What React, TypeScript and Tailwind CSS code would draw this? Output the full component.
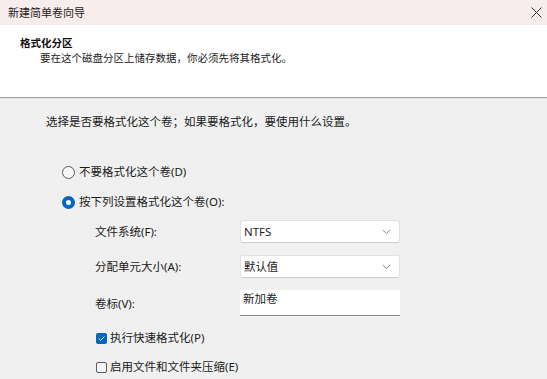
import React from "react";

const font = { fontFamily: '"Noto Sans", "Noto Sans CJK SC", sans-serif' };

function Chevron() {
  return (
    <svg width="9" height="6" viewBox="0 0 9 6" className="shrink-0">
      <path d="M0.8 1 L4.5 4.6 L8.2 1" fill="none" stroke="#7a7a7a" strokeWidth="0.9" />
    </svg>
  );
}

function Select({ value }: { value: string }) {
  return (
    <div className="flex h-[23px] w-[160px] items-center justify-between rounded-[3px] border border-[#e2e2e2] border-b-[#cdcdcd] bg-white pl-[3px] pr-[8px] text-[11.4px] text-[#1a1a1a]">
      <span>{value}</span>
      <Chevron />
    </div>
  );
}

export default function App() {
  return (
    <div className="flex h-[379px] w-[547px] flex-col overflow-hidden bg-[#f0f0f0] text-[#1a1a1a]" style={font}>
      {/* title bar */}
      <div className="flex h-[25px] shrink-0 items-center justify-between bg-[#f8ecec] pl-[8px] pr-[5px]">
        <span className="text-[11px] leading-none text-[#222]">新建简单卷向导</span>
        <svg width="11" height="11" viewBox="0 0 11 11">
          <path d="M0.5 0.5 L10.5 10.5 M10.5 0.5 L0.5 10.5" stroke="#333" strokeWidth="1" />
        </svg>
      </div>
      {/* header */}
      <div className="h-[72px] shrink-0 bg-white pl-[20px] pt-[11px]">
        <div className="text-[10.5px] font-bold leading-[14px] text-[#111]">格式化分区</div>
        <div className="mt-[1px] pl-[20px] text-[10.5px] leading-[14px] text-[#222]">要在这个磁盘分区上储存数据，你必须先将其格式化。</div>
      </div>
      <div className="h-[1px] shrink-0 bg-[#a0a0a0]" />
      <div className="h-[1px] shrink-0 bg-[#e3e3e3]" />
      {/* body */}
      <div className="flex flex-col pl-[46px] pt-[15px] text-[11.5px]">
        <div className="leading-[16px]">选择是否要格式化这个卷；如果要格式化，要使用什么设置。</div>

        <div className="ml-[16px] mt-[34px] flex h-[16px] items-center gap-[4px]">
          <span className="box-border h-[13px] w-[13px] rounded-full border border-[#5d5d5d] bg-[#f7f7f7]" />
          <span className="leading-[16px]">不要格式化这个卷(D)</span>
        </div>
        <div className="ml-[16px] mt-[14px] flex h-[16px] items-center gap-[4px]">
          <span className="flex h-[13px] w-[13px] items-center justify-center rounded-full bg-[#0067c0]">
            <span className="h-[5px] w-[5px] rounded-full bg-white" />
          </span>
          <span className="leading-[16px]">按下列设置格式化这个卷(O):</span>
        </div>

        <div className="ml-[49px] mt-[10px] grid grid-cols-[145px_160px] gap-y-[12px]">
          <div className="flex h-[23px] items-center">文件系统(F):</div>
          <Select value="NTFS" />
          <div className="flex h-[23px] items-center">分配单元大小(A):</div>
          <Select value="默认值" />
          <div className="flex h-[26px] items-center pt-[2px]">卷标(V):</div>
          <div className="h-[26px] w-[160px] border-b border-b-[#8a8a8a] bg-white pl-[3px] pt-[1px] leading-[16px]">新加卷</div>
        </div>

        <div className="ml-[50px] mt-[14px] flex h-[16px] items-center gap-[3px]">
          <span className="flex h-[11px] w-[11px] items-center justify-center rounded-[2px] bg-[#0067c0]">
            <svg width="9" height="9" viewBox="0 0 9 9">
              <path d="M1.8 4.6 L3.7 6.4 L7.3 2.6" fill="none" stroke="white" strokeWidth="1" />
            </svg>
          </span>
          <span className="leading-[16px]">执行快速格式化(P)</span>
        </div>
        <div className="ml-[50px] mt-[13px] flex h-[16px] items-center gap-[3px]">
          <span className="box-border h-[11px] w-[11px] rounded-[2px] border border-[#5d5d5d] bg-[#f7f7f7]" />
          <span className="leading-[16px]">启用文件和文件夹压缩(E)</span>
        </div>
      </div>
    </div>
  );
}
